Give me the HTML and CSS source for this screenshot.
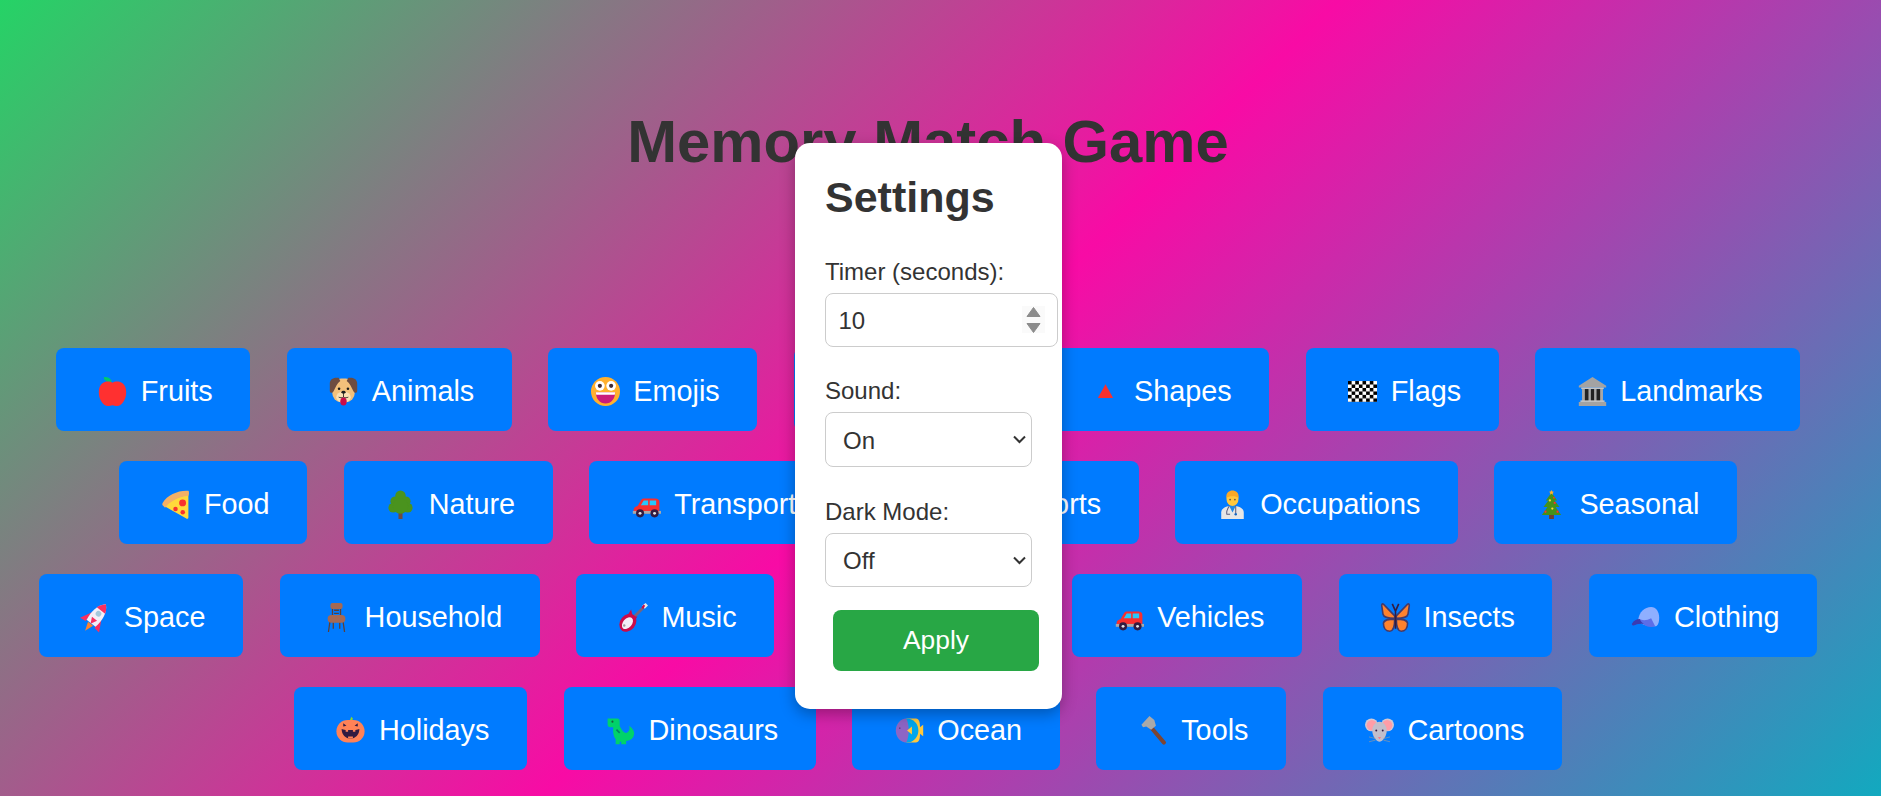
FILE: index.html
```html
<!DOCTYPE html>
<html lang="en">
<head>
  <meta charset="UTF-8" />
  <meta name="viewport" content="width=device-width, initial-scale=1.0" />
  <title>Memory Match Game</title>
  <link rel="stylesheet" href="styles.css">
</head>
<body>
  <h1 class="title">Memory Match Game</h1>

  <div class="categories">
    <button class="category-btn"><svg class="emoji" viewBox="0 0 36 36"><path fill="#00c96b" d="M8 0c4 0 8 1.500 9 6-5 1-9-1-10-5z"/><path fill="#ff3030" d="M18 7C14 4.500 1 4 1 19c0 10 6 17 11 17 3 0 4-1 6-1s3 1 6 1c5 0 11-7 11-17C35 4 22 4.500 18 7z"/></svg>Fruits</button>

    <button class="category-btn"><svg class="emoji" viewBox="0 0 36 36"><rect x="4" y="2" width="28" height="29" rx="11" fill="#f3c07b"/><path fill="#6d4c41" d="M12 1C5 0 1 3 1 8v9c0 3 3 4 5 0 2-4 4-9 8-12zM24 1c7-1 11 2 11 7v9c0 3-3 4-5 0-2-4-4-9-8-12z"/><ellipse cx="18" cy="25" rx="9" ry="7" fill="#fbe0b4"/><circle cx="12.500" cy="14.500" r="1.600" fill="#1c1c1c"/><circle cx="23.500" cy="14.500" r="1.600" fill="#1c1c1c"/><ellipse cx="18" cy="19" rx="2.600" ry="1.800" fill="#1c1c1c"/><path stroke="#1c1c1c" stroke-width="1" fill="none" d="M18 20v5M12 25c2 1 4 1 6 0 2 1 4 1 6 0"/><ellipse cx="18" cy="30.500" rx="4" ry="5" fill="#ca0b4a"/></svg>Animals</button>

    <button class="category-btn"><svg class="emoji" viewBox="0 0 36 36"><circle cx="18" cy="18" r="18" fill="#ffb02e"/><circle cx="11" cy="11" r="6" fill="#fff"/><circle cx="25" cy="11" r="6" fill="#fff"/><circle cx="11" cy="11" r="2.600" fill="#402a32"/><circle cx="25" cy="11" r="2.600" fill="#402a32"/><path fill="#ca1b7c" d="M6 19h24c0 8-5 14-12 14S6 27 6 19z"/><path fill="#fff" d="M6 19h24l-.5 3h-23z"/></svg>Emojis</button>

    <button class="category-btn"><svg class="emoji" viewBox="0 0 36 36"><circle cx="18" cy="18" r="16" fill="#ffb02e"/></svg>Planets</button>

    <button class="category-btn"><svg class="emoji" viewBox="0 0 36 36"><path fill="#f8312f" d="M18 9l9.500 17h-19z"/></svg>Shapes</button>

    <button class="category-btn"><svg class="emoji" viewBox="0 0 36 36"><defs><pattern id="checks" width="9" height="8.600" patternUnits="userSpaceOnUse" y="5"><rect width="9" height="8.600" fill="#fff"/><rect width="4.500" height="4.300" fill="#000"/><rect x="4.500" y="4.300" width="4.500" height="4.300" fill="#000"/></pattern></defs><rect y="5" width="36" height="26" fill="url(#checks)"/></svg>Flags</button>

    <button class="category-btn"><svg class="emoji" viewBox="0 0 36 36"><path fill="#a3a3a3" d="M18 0l17 11v2H1v-2z"/><rect x="4" y="13" width="28" height="2" fill="#c4c4c4"/><rect x="6" y="15" width="24" height="15" fill="#222"/><path fill="#a8a8a8" d="M5 15h3.500v15H5zM13 15h3v15h-3zM20 15h3v15h-3zM27.500 15H31v15h-3.500z"/><rect x="3" y="29" width="30" height="2" fill="#c4c4c4"/><rect x="1" y="31" width="34" height="5" fill="#a3a3a3"/></svg>Landmarks</button>

    <button class="category-btn"><svg class="emoji" viewBox="0 0 36 36"><path fill="#ffd93b" d="M4 20C11 13 22 8 34 6v28c0 2-2 2-3 1z"/><path fill="#f4b066" d="M34 1C22 0 8 6 2 16c-1 2 0 3 1 4l2 2C11 14 22 8 34 7c1 0 1-6 0-6z"/><circle cx="26.800" cy="16" r="4.300" fill="#f8312f"/><circle cx="18" cy="23.600" r="2.800" fill="#f8312f"/><circle cx="27" cy="27.500" r="2.800" fill="#f8312f"/></svg>Food</button>

    <button class="category-btn"><svg class="emoji" viewBox="0 0 36 36"><rect x="15.500" y="27" width="5" height="9" fill="#6d4c41"/><g fill="#4a931e"><circle cx="18" cy="7" r="6.500"/><circle cx="11.500" cy="14" r="6"/><circle cx="24.500" cy="14" r="6"/><circle cx="9" cy="22" r="6"/><circle cx="27" cy="22" r="6"/><circle cx="18" cy="20" r="9.500"/></g></svg>Nature</button>

    <button class="category-btn"><svg class="emoji" viewBox="0 0 36 36"><path fill="#f92f2f" d="M2 25c0-3 2-4 5-5l4-7c1-2 2-2.500 4-2.500h14c3 0 5 1.500 5 4.500v14H2z"/><path fill="#26c9fc" d="M11 19l3.500-6H20v6zM22 13h8v6h-8z"/><rect x="1" y="26" width="35" height="3.500" fill="#a9a9a9"/><circle cx="10" cy="29" r="5" fill="#321b41"/><circle cx="28" cy="29" r="5" fill="#321b41"/><circle cx="10" cy="29" r="1.800" fill="#e6e6e6"/><circle cx="28" cy="29" r="1.800" fill="#e6e6e6"/></svg>Transportation</button>

    <button class="category-btn"><svg class="emoji" viewBox="0 0 36 36"><circle cx="18" cy="18" r="16" fill="#ff822d"/></svg>Sports</button>

    <button class="category-btn"><svg class="emoji" viewBox="0 0 36 36"><path fill="#e6e6e6" d="M4 36v-8c0-5 5-7 10-8h8c5 1 10 3 10 8v8z"/><path fill="#1e88e5" d="M14 20l4 8 4-8z"/><ellipse cx="18" cy="11" rx="7.500" ry="9" fill="#ffc83d"/><path fill="#f9a825" d="M10.500 10C9.500 3 14 .5 18 .5S26.500 3 25.500 10C23 7 13 7 10.500 10z"/><circle cx="15" cy="12" r="1" fill="#5d4037"/><circle cx="21" cy="12" r="1" fill="#5d4037"/><path fill="none" stroke="#5e5e7e" stroke-width="1.300" d="M14 20c-2 3-4 6-3 10h4M22 20v9"/><circle cx="22" cy="30" r="1.500" fill="#1565c0"/></svg>Occupations</button>

    <button class="category-btn"><svg class="emoji" viewBox="0 0 36 36"><rect x="15" y="31" width="6" height="5" fill="#6d3f33"/><g fill="#44911b"><path d="M18 3l7 10H11z"/><path d="M18 8l10 13H8z"/><path d="M18 14l12 17H6z"/></g><path fill="#ffb02e" d="M18 0l1 2 2 .3-1.500 1.500.4 2-1.900-1-1.900 1 .4-2L15 2.300 17 2z"/><g fill="#ffd93b"><circle cx="16" cy="13" r="1.400"/><circle cx="19" cy="23" r="1.400"/></g><g fill="#f8312f"><circle cx="21" cy="9.500" r="1.200"/><circle cx="22" cy="16" r="1.400"/><circle cx="10.500" cy="27" r="1.400"/><circle cx="25.500" cy="27" r="1.400"/></g></svg>Seasonal</button>

    <button class="category-btn"><svg class="emoji" viewBox="0 0 36 36"><g transform="rotate(38 18 18)"><path fill="#ff822d" d="M14 28h8l-4 11z"/><path fill="#f92f60" d="M11 15L3 30l8-1zM25 15l8 15-8-1z"/><path fill="#f3eef8" d="M18-3c8 7 9 19 7 30H11C9 16 10 4 18-3z"/><path fill="#f92f60" d="M18-3c3 3 5.500 6 6.500 10h-13C12.500 3 15 0 18-3zM14 20h8l-4 8z"/><circle cx="18" cy="12" r="3.500" fill="#a4c8dc"/></g></svg>Space</button>

    <button class="category-btn"><svg class="emoji" viewBox="0 0 36 36"><path stroke="#5d4037" stroke-width="1.600" fill="none" d="M13 6v11M23 6v11M15 9h6M15 13h6M10 22L8 36M26 22l2 14M14 24v8M22 24v8"/><rect x="10.500" y="0" width="15" height="7.500" rx="2.500" fill="#a56953"/><rect x="7" y="15" width="22" height="9.500" rx="4.500" fill="#a56953"/></svg>Household</button>

    <button class="category-btn"><svg class="emoji" viewBox="0 0 36 36"><path stroke="#75657f" stroke-width="3.400" fill="none" d="M12 24L31 5"/><path fill="#e8e8e8" d="M29 3l4-3 3 3-4 4z"/><path fill="#ca0b4a" d="M30.500 2l2 1.500-2.500 4-2-2z"/><ellipse cx="11" cy="24.500" rx="9.500" ry="12" transform="rotate(40 11 24.500)" fill="#ca0b4a"/><path fill="#ca0b4a" d="M11 15l4-7 2 8 6 1-5 5z"/><ellipse cx="10.500" cy="25" rx="5.500" ry="8.500" transform="rotate(40 10.500 25)" fill="#f3eef8"/><circle cx="6.500" cy="28" r="1.500" fill="#9b9b9b"/></svg>Music</button>

    <button class="category-btn"><svg class="emoji" viewBox="0 0 36 36"><circle cx="18" cy="18" r="16" fill="#83cbff"/></svg>Science</button>

    <button class="category-btn"><svg class="emoji" viewBox="0 0 36 36"><path fill="#f92f2f" d="M2 25c0-3 2-4 5-5l4-7c1-2 2-2.500 4-2.500h14c3 0 5 1.500 5 4.500v14H2z"/><path fill="#26c9fc" d="M11 19l3.500-6H20v6zM22 13h8v6h-8z"/><rect x="1" y="26" width="35" height="3.500" fill="#a9a9a9"/><circle cx="10" cy="29" r="5" fill="#321b41"/><circle cx="28" cy="29" r="5" fill="#321b41"/><circle cx="10" cy="29" r="1.800" fill="#e6e6e6"/><circle cx="28" cy="29" r="1.800" fill="#e6e6e6"/></svg>Vehicles</button>

    <button class="category-btn"><svg class="emoji" viewBox="0 0 36 36"><g id="wings" fill="#ff822d" stroke="#433b6b" stroke-width="2"><path d="M17 16L3 1.500C1.500.5.500 2 1 4l1.500 10c1 5 9 5 14.500 5z"/><path d="M17 20c-6 0-13 0-14 5 0 6 3 10 8 10 4 0 6-7 6-15z"/></g><use href="#wings" transform="matrix(-1 0 0 1 36 0)"/><path stroke="#321b41" stroke-width="2" fill="none" d="M18 9v23M18 10l-4-9M18 10l4-9"/></svg>Insects</button>

    <button class="category-btn"><svg class="emoji" viewBox="0 0 36 36"><path fill="#8fafff" d="M9 21C10 11 17 5 25 5c6 0 10 6 10 13 0 7-2 11-5 11-8 0-17-1-21-8z"/><path fill="#5c6ee8" d="M10 20c4 2 10 2 15-1l5 10c-7 2-16 0-20-9z"/><path fill="#3b3bb0" d="M1 26c2-4 6-6 10-6 1 3 3 5 5 6-5-1-9 0-13 2-1 0-2-1-2-2z"/></svg>Clothing</button>

    <button class="category-btn"><svg class="emoji" viewBox="0 0 36 36"><path fill="#86d72f" d="M17 6l2-5 2 2-1 3z"/><rect x=".5" y="5" width="35" height="28" rx="14" fill="#ff8257"/><path fill="#321b41" d="M9 9l4 3-4 1zM27 9l-4 3 4 1zM7 16c5 2 17 2 22 0 0 7-5 12-11 12S7 23 7 16z"/><path fill="#ff8257" d="M12 17.200h3v2.500h-3zM21 17.200h3v2.500h-3zM15 25.500h6V28h-6z"/></svg>Holidays</button>

    <button class="category-btn"><svg class="emoji" viewBox="0 0 36 36"><path fill="#00d26a" d="M2 3h12q3 0 3 4v5q0 1 4 7 4 4 7 0 2-3 1-7 6 5 6 10-1 8-10 9v4h-6v-3h-2v3h-5v-6q-4-5-3-15H5q-3 0-3-3z"/><circle cx="8" cy="7" r="1.300" fill="#1c5c3a"/><path stroke="#008463" stroke-width="2" d="M13 17l4 4"/></svg>Dinosaurs</button>

    <button class="category-btn"><svg class="emoji" viewBox="0 0 36 36"><path fill="#ffc83d" d="M14 3h12c4 0 5 5 5 10v10c0 5-1 10-5 10H14zM31 14l4-3v14l-4-3z"/><ellipse cx="15" cy="18" rx="14" ry="15" fill="#00a6ed"/><path fill="#8d65c5" d="M14 3C7 3 1 10 1 18s6 15 13 15c4-8 4-22 0-30z"/><path fill="#ffc83d" d="M15 18l6-5v10z"/><circle cx="6" cy="15" r=".8" fill="#321b41"/></svg>Ocean</button>

    <button class="category-btn"><svg class="emoji" viewBox="0 0 36 36"><path stroke="#7d4533" stroke-width="5" stroke-linecap="round" d="M14 13l17 20"/><path fill="#a9a9a9" d="M3 11L13 0l6 5 2 7-6 5-6-4-4 1z"/></svg>Tools</button>

    <button class="category-btn"><svg class="emoji" viewBox="0 0 36 36"><circle cx="8" cy="11" r="8" fill="#d3c8d3"/><circle cx="28" cy="11" r="8" fill="#d3c8d3"/><circle cx="8.500" cy="11.500" r="6.500" fill="#ff9da7"/><circle cx="27.500" cy="11.500" r="6.500" fill="#ff9da7"/><path fill="#c3becb" d="M18 7c6 0 9 6 9 11 0 8-6 14-9 14s-9-6-9-14c0-5 3-11 9-11z"/><circle cx="14" cy="18" r="1.200" fill="#321b41"/><circle cx="22" cy="18" r="1.200" fill="#321b41"/><path fill="#f4798a" d="M16 26h4l-2 3z"/><path stroke="#9b9b9b" stroke-width=".8" fill="none" d="M13 28l-8-2M13 30l-8 2M23 28l8-2M23 30l8 2"/></svg>Cartoons</button>
  </div>

  <div class="settings-modal">
    <h2 class="settings-title">Settings</h2>

    <div class="field">
      <label for="timer">Timer (seconds):</label>
      <div class="number-wrap">
        <input type="number" id="timer" value="10">
        <svg class="spinner" viewBox="0 0 23 27"><rect width="23" height="27" fill="#fafafa"/><path fill="#8c8c8c" d="M11.500 1.500L18 10.500H5zM5 17.500h13L11.500 26.500z" stroke="#8c8c8c" stroke-linejoin="round"/></svg>
      </div>
    </div>

    <div class="field">
      <label for="sound">Sound:</label>
      <div class="select-wrap">
        <select id="sound">
          <option>On</option>
          <option>Off</option>
        </select>
        <svg class="chevron" viewBox="0 0 13 9"><path d="M1 1.500l5.500 5.500L12 1.500" fill="none" stroke="#333" stroke-width="2"/></svg>
      </div>
    </div>

    <div class="field">
      <label for="dark">Dark Mode:</label>
      <div class="select-wrap">
        <select id="dark">
          <option>Off</option>
          <option>On</option>
        </select>
        <svg class="chevron" viewBox="0 0 13 9"><path d="M1 1.500l5.500 5.500L12 1.500" fill="none" stroke="#333" stroke-width="2"/></svg>
      </div>
    </div>

    <button class="apply-btn">Apply</button>
  </div>
</body>
</html>
```

FILE: styles.css
```css
/* Global styles */
html {
  height: 100%;
}
body {
  margin: 0;
  padding: 107px 25px 0 0;
  min-height: 100%;
  box-sizing: border-box;
  overflow: hidden;
  background: linear-gradient(135deg, #25d366, #f80ba5 50%, #12a9bf);
  font-family: "Liberation Sans", Arial, sans-serif;
  color: #333;
}
.title {
  margin: 0 0 172px;
  font-size: 59.8px;
  line-height: 69px;
  text-align: center;
  color: #333;
}
/* Category buttons */
.categories {
  display: flex;
  flex-wrap: wrap;
  justify-content: center;
  gap: 30px 36.5px;
  margin: 0 18px;
}
.category-btn {
  display: flex;
  align-items: center;
  height: 83px;
  padding: 4px 37.6px 0 40px;
  background: #007bff;
  color: #fff;
  border: none;
  border-radius: 8px;
  font: inherit;
  font-size: 28.8px;
  box-sizing: border-box;
}
.emoji {
  flex: none;
  width: 29px;
  height: 29px;
  margin: 0 13.5px 0 2.5px;
  overflow: visible;
}
/* Settings card sits over the page */
.settings-modal {
  position: absolute;
  top: 143px;
  left: 795px;
  width: 267px;
  height: 566px;
  padding: 30px;
  background: #fff;
  border-radius: 15px;
  box-shadow: 0 5px 15px rgba(0,0,0,0.3);
  box-sizing: border-box;
}
.settings-title {
  margin: 0 0 36px;
  font-size: 43px;
  line-height: 48px;
}
.field {
  margin-bottom: 30px;
}
label {
  display: block;
  margin-bottom: 6px;
  font-size: 24px;
  line-height: 30px;
}
.number-wrap {
  position: relative;
  margin-bottom: -1px;
}
input {
  display: block;
  width: 100%;
  height: 28px;
  padding: 13px 11.5px 11px 12.5px;
  border: 1px solid #ccc;
  border-radius: 8px;
  background: #fff;
  color: #333;
  font: inherit;
  font-size: 24px;
  appearance: textfield;
}
.spinner {
  position: absolute;
  top: 13px;
  left: 197px;
  width: 23px;
  height: 27px;
}
.select-wrap {
  position: relative;
}
select {
  display: block;
  width: 100%;
  height: 54.5px;
  padding: 13px 12px 11px 13px;
  border: 1px solid #ccc;
  border-radius: 8px;
  background: #fff;
  color: #333;
  font: inherit;
  font-size: 24px;
  appearance: none;
  text-indent: 4px;
}
.chevron {
  position: absolute;
  top: 23px;
  right: 6px;
  width: 13px;
  height: 9px;
  pointer-events: none;
}
.apply-btn {
  display: block;
  width: 206px;
  height: 61px;
  margin: -7px 0 0 8px;
  background: #28a745;
  color: #fff;
  border: none;
  border-radius: 8px;
  font: inherit;
  font-size: 26.4px;
}
```
